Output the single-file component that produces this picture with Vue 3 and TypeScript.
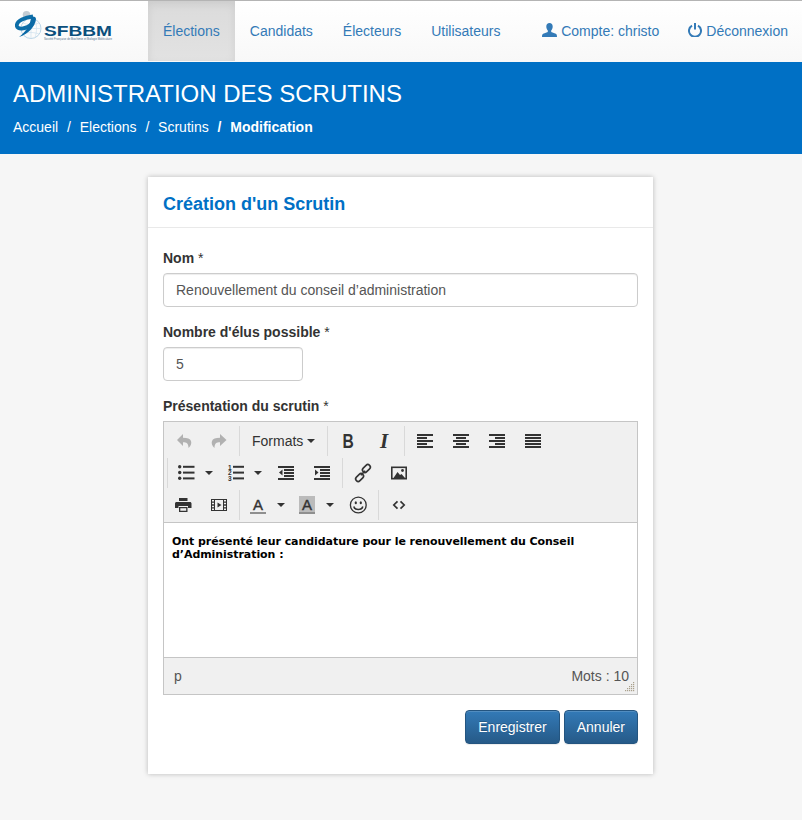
<script setup lang="ts">
interface Btn { icon?: string; label?: string; split?: boolean; off?: boolean }

const navMain = [
  { label: 'Élections', active: true },
  { label: 'Candidats', active: false },
  { label: 'Électeurs', active: false },
  { label: 'Utilisateurs', active: false },
]
const crumbs = ['Accueil', 'Elections', 'Scrutins']

const lines = (rows: [number, number][]) =>
  rows.map(([x, w], i) => `<rect x="${x}" y="${1 + i * 3}" width="${w}" height="2"/>`).join('')

const digit = (n: number, y: number) =>
  `<text x="1" y="${y}" font-size="6.500" font-weight="700" font-family="Liberation Sans">${n}</text>`

const icons: Record<string, string> = {
  undo: '<path d="M8 1 2 7l6 6V9.200c3.600 0 5.200 1 5.600 5.800 2.400-2.200 3.200-4.600 2.400-7C15.200 5.600 12.500 4.800 8 4.800z"/>',
  redo: '<path d="M9 1l6.500 6L9 13V9.200c-3.600 0-5.200 1-5.600 5.800C1 12.800.2 10.400 1 8c.8-2.400 3.500-3.200 8-3.200z"/>',
  left: lines([[0, 16], [0, 10], [0, 16], [0, 10], [0, 16]]),
  center: lines([[0, 16], [3, 10], [0, 16], [3, 10], [0, 16]]),
  right: lines([[0, 16], [6, 10], [0, 16], [6, 10], [0, 16]]),
  justify: lines([[0, 16], [0, 16], [0, 16], [0, 16], [0, 16]]),
  bullist:
    '<circle cx="1.700" cy="1.700" r="1.700"/><circle cx="1.700" cy="7.500" r="1.700"/><circle cx="1.700" cy="13.300" r="1.700"/>' +
    '<rect x="5" y=".8" width="11.500" height="2"/><rect x="5" y="6.600" width="11.500" height="2"/><rect x="5" y="12.400" width="11.500" height="2"/>',
  numlist:
    digit(1, 4.500) + digit(2, 10) + digit(3, 15.500) +
    '<rect x="6" y=".8" width="11" height="2"/><rect x="6" y="6.600" width="11" height="2"/><rect x="6" y="12.400" width="11" height="2"/>',
  outdent:
    '<rect x="0" y="1" width="16" height="2"/><rect x="6" y="4" width="10" height="2"/><rect x="6" y="7" width="10" height="2"/><rect x="6" y="10" width="10" height="2"/><rect x="0" y="13" width="16" height="2"/><path d="M4.500 4.500v6L1 7.500z"/>',
  indent:
    '<rect x="0" y="1" width="16" height="2"/><rect x="6" y="4" width="10" height="2"/><rect x="6" y="7" width="10" height="2"/><rect x="6" y="10" width="10" height="2"/><rect x="0" y="13" width="16" height="2"/><path d="M1 4.500v6l3.500-3z"/>',
  link:
    '<g fill="none" stroke="currentColor" stroke-width="1.600"><rect x="8.900" y="-1" width="5" height="9" rx="2.500" transform="rotate(45 11.400 3.500)"/><rect x="2.100" y="8" width="5" height="9" rx="2.500" transform="rotate(45 4.600 12.500)"/></g><path d="M5.800 10.200 10.200 5.800" stroke="currentColor" stroke-width="1.600"/>',
  image:
    '<rect x=".8" y="2.300" width="14.400" height="11.400" fill="none" stroke="currentColor" stroke-width="1.600"/><path d="M2.500 13 6.500 7l2.500 3 1.500-1 3.500 4z"/><circle cx="11.500" cy="5.500" r="1.400"/>',
  print:
    '<path d="M4 1h8.500v3H4zM1.500 5h13.500c.8 0 1.500.7 1.500 1.500V11h-3.500V9H3.500v2H0V6.500C0 5.700.7 5 1.500 5z"/><path d="M4 10h8.500v5H4zm1.300 1.200v2.600h5.900v-2.600z" fill-rule="evenodd"/>',
  media:
    '<path fill-rule="evenodd" d="M0 2h16v12H0zm1 1v1.500h2V3zm0 2.800v1.500h2V5.800zm0 2.900v1.500h2V8.700zm0 2.800V13h2v-1.500zM4 3v10h8V3zm9 0v1.500h2V3zm0 2.800v1.500h2V5.800zm0 2.900v1.500h2V8.700zm0 2.800V13h2v-1.500z"/><path d="M6.500 5.500v5L10.500 8z"/>',
  emoji:
    '<circle cx="8.300" cy="8" r="7.900" fill="none" stroke="currentColor" stroke-width="1.300"/><ellipse cx="5.800" cy="5.800" rx="1.100" ry="1.500"/><ellipse cx="10.800" cy="5.800" rx="1.100" ry="1.500"/><path d="M3.800 9.500c.8 4 8.200 4 9 0" fill="none" stroke="currentColor" stroke-width="1.600"/>',
  code:
    '<path d="M6.500 4.300 2.800 8l3.700 3.700M9.500 4.300 13.200 8l-3.700 3.700" fill="none" stroke="currentColor" stroke-width="1.700"/>',
}

const toolbar: { first?: boolean; groups: Btn[][] }[] = [
  {
    groups: [
      [{ icon: 'undo', off: true }, { icon: 'redo', off: true }],
      [{ label: 'Formats' }],
      [{ label: 'B' }, { label: 'I' }],
      [{ icon: 'left' }, { icon: 'center' }, { icon: 'right' }, { icon: 'justify' }],
    ],
  },
  {
    first: true,
    groups: [
      [{ icon: 'bullist', split: true }, { icon: 'numlist', split: true }, { icon: 'outdent' }, { icon: 'indent' }],
      [{ icon: 'link' }, { icon: 'image' }],
    ],
  },
  {
    groups: [
      [{ icon: 'print' }, { icon: 'media' }],
      [{ label: 'fore', split: true }, { label: 'back', split: true }, { icon: 'emoji' }],
      [{ icon: 'code' }],
    ],
  },
]

const dots = [
  [8, 0], [6, 2], [8, 2], [4, 4], [6, 4], [8, 4], [2, 6], [4, 6], [6, 6], [8, 6], [0, 8], [2, 8], [4, 8], [6, 8], [8, 8],
]
</script>

<template>
  <div class="page">
    <header class="navbar">
      <a class="brand" href="#" aria-label="SFBBM">
        <svg width="100" height="32" viewBox="0 0 100 32">
          <circle cx="16" cy="17.500" r="10" fill="none" stroke="#bcd6e8" stroke-width="1" />
          <path d="M16 7.500v20M20 8.500c2 6 2 12 0 18M6 17.500h20M8 12c5 2 11 2 16 0M8 23c5-2 11-2 16 0" fill="none" stroke="#cfe1ee" stroke-width=".7" />
          <circle cx="11.500" cy="3.800" r="3.800" fill="#c3ccd3" />
          <path d="M18 5.500C10 6.500 1.800 9.500 1.800 14.500 1.800 18.500 10 19.500 18 12" fill="none" stroke="#0d6ea8" stroke-width="3.800" />
          <path d="M17.500 5.500c2.800 0 3.500 1.200 3.500 2.800C20 15.500 13.500 23 4 26 10 21.500 14.500 15.500 16 7.500z" fill="#0b6aa6" />
          <text x="29" y="25" class="logo-name" textLength="68" lengthAdjust="spacingAndGlyphs">SFBBM</text>
          <text x="29" y="29" class="logo-tag" textLength="68" lengthAdjust="spacingAndGlyphs">Société Française de Biochimie et Biologie Moléculaire</text>
        </svg>
      </a>
      <nav class="nav-main">
        <a v-for="n in navMain" :key="n.label" href="#" :class="['nav-link', { active: n.active }]">{{ n.label }}</a>
      </nav>
      <nav class="nav-right">
        <a href="#" class="nav-link account">
          <svg class="glyph" width="15" height="14" viewBox="0 0 15 14">
            <path d="M7.500 0C5.500 0 4.300 1.500 4.300 3.500c0 1.700.7 3.200 1.500 4.100v1.300L1.200 10.800C.3 11.200 0 12 0 14h15c0-2-.3-2.800-1.200-3.200L9.200 8.900V7.600c.8-.9 1.500-2.400 1.500-4.100C10.700 1.500 9.500 0 7.500 0z" />
          </svg>
          Compte: christo
        </a>
        <a href="#" class="nav-link logout">
          <svg class="glyph" width="14" height="14" viewBox="0 0 14 14">
            <path d="M4 2.600A6 6 0 1 0 10 2.600" fill="none" stroke="currentColor" stroke-width="2" />
            <rect x="6" y="0" width="2" height="6.500" />
          </svg>
          Déconnexion
        </a>
      </nav>
    </header>

    <section class="banner">
      <h1>ADMINISTRATION DES SCRUTINS</h1>
      <ol class="crumbs">
        <li v-for="(c, i) in crumbs" :key="c"><a href="#">{{ c }}</a><span :class="['sep', { strong: i === crumbs.length - 1 }]">/</span></li>
        <li class="current">Modification</li>
      </ol>
    </section>

    <main class="card">
      <div class="card-head">
        <h2>Création d'un Scrutin</h2>
      </div>
      <form class="card-body" @submit.prevent>
        <div class="field">
          <label>Nom <span class="req">*</span></label>
          <input class="input" type="text" value="Renouvellement du conseil d’administration" />
        </div>
        <div class="field">
          <label>Nombre d'élus possible <span class="req">*</span></label>
          <input class="input short" type="text" value="5" />
        </div>
        <div class="field">
          <label>Présentation du scrutin <span class="req">*</span></label>
          <div class="editor">
            <div class="toolbar">
              <div v-for="(row, r) in toolbar" :key="r" :class="['tb-row', { inset: row.first }]">
                <div v-for="(group, g) in row.groups" :key="g" :class="['tb-group', { sep: g > 0 || row.first }]">
                  <button
                    v-for="(b, i) in group"
                    :key="i"
                    type="button"
                    :class="['tb-btn', { split: b.split, off: b.off, wide: b.label === 'Formats' }]"
                  >
                    <span class="tb-face">
                      <svg v-if="b.icon" width="16" height="16" viewBox="0 0 16 16" class="tb-icon" v-html="icons[b.icon]"></svg>
                      <span v-else-if="b.label === 'Formats'" class="tb-text">Formats</span>
                      <span v-else-if="b.label === 'B'" class="tb-bold">B</span>
                      <span v-else-if="b.label === 'I'" class="tb-italic">I</span>
                      <span v-else-if="b.label === 'fore'" class="tb-color">A</span>
                      <span v-else-if="b.label === 'back'" class="tb-color back">A</span>
                    </span>
                    <span v-if="b.split || b.label === 'Formats'" class="caret"></span>
                  </button>
                </div>
              </div>
            </div>
            <div class="content">
              <p><strong>Ont présenté leur candidature pour le renouvellement du Conseil d’Administration :</strong></p>
            </div>
            <div class="status">
              <span>p</span>
              <span>Mots : 10</span>
              <svg class="resize" width="10" height="10" viewBox="0 0 10 10">
                <rect v-for="(d, i) in dots" :key="i" :x="d[0]" :y="d[1]" width="1.200" height="1.200" />
              </svg>
            </div>
          </div>
        </div>
        <div class="actions">
          <button type="button" class="btn">Enregistrer</button>
          <button type="button" class="btn">Annuler</button>
        </div>
      </form>
    </main>
  </div>
</template>

<style>
html,
body {
  margin: 0;
  background: #f6f6f6;
}
</style>

<style scoped>
.page {
  min-height: 820px;
  font-family: 'Liberation Sans', Arial, sans-serif;
  font-size: 14px;
  line-height: 20px;
  color: #333;
  background: #f6f6f6;
  overflow: hidden;
}
a {
  text-decoration: none;
}

/* navbar */
.navbar {
  display: flex;
  height: 61px;
  border-top: 1px solid #b4b4b4;
  background: linear-gradient(to bottom, #fff 0, #f8f8f8 100%);
}
.brand {
  display: block;
  width: 148px;
  padding: 10px 0 0 15px;
  box-sizing: border-box;
  flex: none;
}
.logo-name {
  font: 700 14px 'Liberation Sans', Arial, sans-serif;
  fill: #0b4f7c;
}
.logo-tag {
  font: 3px 'Liberation Sans', Arial, sans-serif;
  fill: #53708a;
}
.nav-main,
.nav-right {
  display: flex;
}
.nav-right {
  margin-left: auto;
}
.nav-link {
  display: flex;
  align-items: center;
  gap: 4px;
  height: 60px;
  padding: 0 15px;
  color: #337ab7;
}
.nav-link.active {
  background: linear-gradient(to bottom, #dbdbdb 0, #e2e2e2 100%);
  box-shadow: inset 0 3px 9px rgba(0, 0, 0, 0.075);
}
.glyph {
  fill: currentColor;
  margin-top: -3px;
}
.account {
  padding-right: 14px;
}
.logout {
  padding-right: 14px;
}

/* banner */
.banner {
  height: 92px;
  padding: 0 13px;
  background: #0070c5;
  color: #fff;
}
.banner h1 {
  margin: 0;
  padding-top: 18px;
  font-size: 24px;
  font-weight: 400;
  line-height: 28px;
}
.crumbs {
  display: flex;
  margin: 9px 0 0;
  padding: 0;
  list-style: none;
}
.crumbs a {
  color: #fff;
}
.crumbs .sep {
  padding: 0 8.850px;
}
.crumbs .sep.strong,
.crumbs .current {
  font-weight: 700;
}

/* card */
.card {
  width: 505px;
  margin: 23px 0 46px 148px;
  background: #fff;
  box-shadow: 0 0 5px rgba(0, 0, 0, 0.25);
}
.card-head {
  padding: 17px 15px 13px;
  border-bottom: 1px solid #e9e9e9;
}
.card-head h2 {
  margin: 0;
  font-size: 18px;
  font-weight: 700;
  line-height: 20px;
  color: #0070c5;
}
.card-body {
  padding: 20px 15px 30px;
}
.field {
  margin-bottom: 15px;
}
label {
  display: block;
  margin-bottom: 5px;
  font-weight: 700;
}
.req {
  font-weight: 400;
}
.input {
  display: block;
  width: 100%;
  height: 34px;
  box-sizing: border-box;
  padding: 6px 12px;
  border: 1px solid #ccc;
  border-radius: 4px;
  background: #fff;
  color: #555;
  font: 14px/20px 'Liberation Sans', Arial, sans-serif;
  box-shadow: inset 0 1px 1px rgba(0, 0, 0, 0.075);
}
.input.short {
  width: 140px;
}

/* editor */
.editor {
  position: relative;
  border: 1px solid #c5c5c5;
}
.toolbar {
  padding: 3px 0 1px 1px;
  background: #f0f0f0;
  border-bottom: 1px solid #c5c5c5;
}
.tb-row {
  display: flex;
  height: 32px;
}
.tb-row.inset {
  margin-left: 2px;
}
.tb-group {
  display: flex;
  padding: 1px 2px 1px 0;
}
.tb-group.sep {
  position: relative;
  padding-left: 3px;
}
.tb-group.sep::before {
  content: '';
  position: absolute;
  left: 0;
  top: 1px;
  bottom: 1px;
  width: 1px;
  background: #d9d9d9;
}
.tb-btn {
  display: flex;
  align-items: center;
  justify-content: center;
  width: 36px;
  height: 30px;
  padding: 0;
  border: 0;
  background: none;
  color: #333;
  font: 14px 'Liberation Sans', Arial, sans-serif;
}
.tb-btn.split {
  width: 49px;
  justify-content: flex-start;
}
.tb-btn.split .tb-face {
  width: 32px;
}
.tb-btn.split .caret {
  margin-left: 3px;
}
.tb-btn.wide {
  width: 83px;
  justify-content: flex-start;
  padding-left: 10px;
  box-sizing: border-box;
}
.tb-btn.wide .caret {
  margin-left: 4px;
}
.tb-btn.off {
  color: #b1b1b1;
}
.tb-face {
  display: flex;
  align-items: center;
  justify-content: center;
}
.tb-icon {
  display: block;
  fill: currentColor;
  overflow: visible;
}
.tb-bold {
  display: block;
  font-size: 20px;
  font-weight: 700;
  transform: scaleX(0.78);
}
.tb-italic {
  font: italic 700 21px 'Liberation Serif', serif;
}
.tb-color {
  display: block;
  width: 16px;
  height: 16px;
  border-bottom: 2px solid #8f8f8f;
  font-size: 15px;
  font-weight: 400;
  line-height: 18px;
  text-align: center;
  -webkit-text-stroke: 0.4px #333;
}
.tb-color.back {
  background: #bbb;
}
.caret {
  display: block;
  width: 0;
  height: 0;
  border-top: 4px solid #333;
  border-left: 4px solid transparent;
  border-right: 4px solid transparent;
}
.content {
  height: 134px;
  box-sizing: border-box;
  padding: 12px 8px;
  background: #fff;
  color: #000;
  font: 11px/13px 'DejaVu Sans', Verdana, sans-serif;
  letter-spacing: -0.06px;
}
.content p {
  margin: 0;
}
.status {
  display: flex;
  justify-content: space-between;
  align-items: center;
  height: 37px;
  box-sizing: border-box;
  padding: 0 8px 0 10px;
  background: #f0f0f0;
  border-top: 1px solid #c5c5c5;
  color: #555;
}
.resize {
  position: absolute;
  right: 2px;
  bottom: 2px;
  fill: #a9a08c;
}

/* actions */
.actions {
  display: flex;
  justify-content: flex-end;
  gap: 4px;
}
.btn {
  height: 34px;
  padding: 0 12px;
  border: 1px solid #245580;
  border-radius: 4px;
  background: linear-gradient(to bottom, #337ab7 0, #265a88 100%);
  color: #fff;
  font: 14px 'Liberation Sans', Arial, sans-serif;
  text-shadow: 0 -1px 0 rgba(0, 0, 0, 0.2);
  box-shadow: inset 0 1px 0 rgba(255, 255, 255, 0.15), 0 1px 1px rgba(0, 0, 0, 0.075);
}
</style>
